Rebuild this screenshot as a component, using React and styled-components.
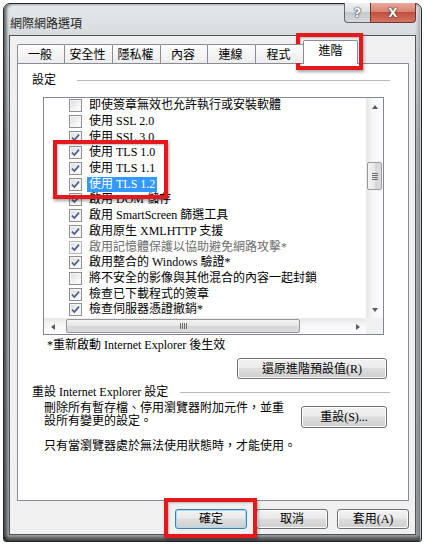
import styled, { createGlobalStyle } from "styled-components"

const GlobalStyle = createGlobalStyle`
  body {
    margin: 0;
    background: #fff;
    font-family: "Liberation Serif", "Noto Sans CJK TC", serif;
    font-size: 12px;
    color: #000;
  }
`

const tabs = [
  { label: '一般', width: 48 },
  { label: '安全性', width: 49 },
  { label: '隱私權', width: 49 },
  { label: '內容', width: 48 },
  { label: '連線', width: 49 },
  { label: '程式', width: 49 },
  { label: '進階', width: 55, active: true },
]

const options = [
  { label: '即使簽章無效也允許執行或安裝軟體' },
  { label: '使用 SSL 2.0' },
  { label: '使用 SSL 3.0', checked: true },
  { label: '使用 TLS 1.0', checked: true },
  { label: '使用 TLS 1.1', checked: true },
  { label: '使用 TLS 1.2', checked: true, selected: true },
  { label: '啟用 DOM 儲存', checked: true },
  { label: '啟用 SmartScreen 篩選工具', checked: true },
  { label: '啟用原生 XMLHTTP 支援', checked: true },
  { label: '啟用記憶體保護以協助避免網路攻擊*', checked: true, disabled: true },
  { label: '啟用整合的 Windows 驗證*', checked: true },
  { label: '將不安全的影像與其他混合的內容一起封鎖' },
  { label: '檢查已下載程式的簽章', checked: true },
  { label: '檢查伺服器憑證撤銷*', checked: true },
]

// red annotation boxes drawn over the screenshot
const marks = [
  { x: 296, y: 33, w: 67, h: 37 },
  { x: 53, y: 140, w: 115, h: 59 },
  { x: 164, y: 498, w: 93, h: 40 },
]

const Page = styled.div`
  position: relative;
  width: 429px;
  height: 546px;
  box-sizing: border-box;
  padding: 3px 0 0 3px;
  overflow: hidden;
  background: #fff;
`

const Window = styled.div`
  width: 419px;
  height: 539px;
  box-sizing: border-box;
  display: flex;
  flex-direction: column;
  padding: 0 5px 6px 5px;
  border: 1px solid #23272a;
  border-radius: 7px 7px 3px 3px;
  background: linear-gradient(to bottom, #e6e9eb 0, #d8dcdf 30px, #b3b7ba 140px, #9da1a4 100%);
  box-shadow: inset 3px 0 3px rgba(0, 0, 0, 0.45), inset -1px 0 0 rgba(255, 255, 255, 0.6),
    inset -4px 0 3px rgba(0, 0, 0, 0.15), inset 0 -4px 3px rgba(0, 0, 0, 0.45);
`

const TitleBar = styled.div`
  height: 31px;
  margin: 0 -5px;
  padding: 0 5px 0 6px;
  display: flex;
  justify-content: space-between;
  align-items: flex-start;
`

const Title = styled.div`
  margin-top: 12px;
  font-family: "Noto Sans CJK TC", sans-serif;
  font-size: 12px;
  line-height: 14px;
  color: #1e1e1e;
`

const Caption = styled.div`
  display: flex;
  margin-top: -1px;
`

const CaptionButton = styled.div`
  height: 20px;
  box-sizing: border-box;
  display: flex;
  align-items: center;
  justify-content: center;
  border: 1px solid #5e6469;
  border-top: none;
  font-family: "DejaVu Sans", sans-serif;
  font-weight: bold;
  color: #fff;
  text-shadow: 0 0 2px #2a2a2a, 0 0 1px #000;
`

const HelpButton = styled(CaptionButton)`
  width: 27px;
  margin-right: -1px;
  border-radius: 0 0 0 4px;
  font-size: 13px;
  background: linear-gradient(to bottom, #eef0f2 0, #dde1e4 45%, #c3c8cc 50%, #d6dadd 100%);
`

const CloseButton = styled(CaptionButton)`
  width: 46px;
  border-radius: 0 0 4px 0;
  border-color: #6a3a33;
  font-size: 12px;
  background: linear-gradient(to bottom, #e9a99b 0, #d98473 45%, #c24f3c 50%, #d57564 100%);
`

const Client = styled.div`
  flex: 1;
  display: flex;
  flex-direction: column;
  border: 1px solid #4f5459;
  background: #f0f0f0;
  padding: 0 6px 0 7px;
`

const TabStrip = styled.div`
  height: 28px;
  margin-bottom: -1px;
  display: flex;
  align-items: flex-end;
  position: relative;
  z-index: 1;
`

const Tab = styled.div`
  width: ${p => p.$width}px;
  height: ${p => (p.$active ? 24 : 19)}px;
  box-sizing: border-box;
  margin-left: -1px;
  margin-bottom: ${p => (p.$active ? 0 : 1)}px;
  display: flex;
  align-items: center;
  justify-content: center;
  padding: ${p => (p.$active ? '0 0 5px 0' : '0 2px 0 0')};
  border: 1px solid #898c95;
  border-bottom: none;
  border-radius: 2px 2px 0 0;
  background: ${p => (p.$active ? '#fff' : 'linear-gradient(to bottom, #fdfdfd, #ececec)')};
  font-family: "Noto Sans CJK TC", sans-serif;
  line-height: 14px;

  &:first-child {
    margin-left: 0;
  }
`

const Panel = styled.div`
  flex: 1;
  display: flex;
  flex-direction: column;
  border: 1px solid #898c95;
  background: #fff;
`

const GroupHeader = styled.div`
  display: flex;
  align-items: center;
  margin-top: ${p => p.$top}px;
  padding: 0 18px 0 14px;
  line-height: 14px;
`

const GroupRule = styled.div`
  flex: 1;
  margin-left: ${p => p.$gap}px;
  border-top: 1px solid #b9b9b9;
`

const ListBox = styled.div`
  width: 341px;
  height: 238px;
  box-sizing: border-box;
  margin: 10px 0 0 25px;
  border: 1px solid #828790;
  display: grid;
  grid-template-columns: 1fr 17px;
  grid-template-rows: 1fr 16px;
  overflow: hidden;
`

const Options = styled.div`
  overflow: hidden;
`

const Row = styled.div`
  height: 15.7px;
  display: flex;
  align-items: center;
  padding-left: 25px;
  white-space: nowrap;
`

const Box = styled.span`
  width: 13px;
  height: 13px;
  box-sizing: border-box;
  flex: none;
  margin-right: 5px;
  border: 1px solid ${p => (p.$disabled ? '#b5b5b5' : '#8f8f8f')};
  background: linear-gradient(135deg, #d9dadb 0, #f4f4f4 60%, #fff 100%);
  box-shadow: inset 0 0 0 1px #f6f6f6;
  display: flex;
  align-items: center;
  justify-content: center;
`

const OptionText = styled.span`
  padding: 0 2px;
  line-height: 15px;
  color: ${p => (p.$selected ? '#fff' : p.$disabled ? '#6d6d6d' : '#000')};
  background: ${p => (p.$selected ? '#3399ff' : 'transparent')};
`

const VScroll = styled.div`
  display: flex;
  flex-direction: column;
  background: linear-gradient(to right, #e6e6e6 0, #f5f5f5 30%, #fdfdfd 100%);
  border-left: 1px solid #ececec;
`

const HScroll = styled.div`
  display: flex;
  background: linear-gradient(to bottom, #e6e6e6 0, #f5f5f5 30%, #fdfdfd 100%);
  border-top: 1px solid #ececec;
`

const Corner = styled.div`
  background: #f0f0f0;
`

const ArrowBox = styled.div`
  flex: none;
  width: ${p => (p.$horizontal ? 17 : 16)}px;
  height: ${p => (p.$horizontal ? 15 : 17)}px;
  display: flex;
  align-items: center;
  justify-content: center;
`

const Arrow = styled.span`
  width: 0;
  height: 0;
  border: 3px solid transparent;
  ${p => p.$dir === 'up' && 'border-bottom: 4px solid #5a5a5a; border-top: 0;'}
  ${p => p.$dir === 'down' && 'border-top: 4px solid #5a5a5a; border-bottom: 0;'}
  ${p => p.$dir === 'left' && 'border-right: 4px solid #5a5a5a; border-left: 0;'}
  ${p => p.$dir === 'right' && 'border-left: 4px solid #5a5a5a; border-right: 0;'}
`

const Track = styled.div`
  flex: 1;
  display: flex;
  flex-direction: ${p => (p.$horizontal ? 'row' : 'column')};
`

const Thumb = styled.div`
  box-sizing: border-box;
  display: flex;
  align-items: center;
  justify-content: center;
  border: 1px solid #979797;
  border-radius: 2px;
  ${p =>
    p.$horizontal
      ? `width: ${p.$size}px; height: 14px; margin-left: ${p.$offset}px;
         background: linear-gradient(to bottom, #f4f4f4, #e6e6e6 50%, #d6d6d6 51%, #dcdcdc);`
      : `height: ${p.$size}px; width: 15px; margin-top: ${p.$offset}px;
         background: linear-gradient(to right, #f4f4f4, #e6e6e6 50%, #d6d6d6 51%, #dcdcdc);`}
`

const Grip = styled.span`
  ${p =>
    p.$horizontal
      ? 'width: 7px; height: 6px; background: repeating-linear-gradient(to right, #6a6a6a 0 1px, transparent 1px 2px);'
      : 'width: 6px; height: 7px; background: repeating-linear-gradient(to bottom, #6a6a6a 0 1px, transparent 1px 2px);'}
`

const Note = styled.div`
  margin: 3px 0 0 29px;
  line-height: 14px;
`

const ButtonRow = styled.div`
  display: flex;
  justify-content: flex-end;
  margin-top: 6px;
  padding-right: 21px;
`

const Button = styled.div`
  width: ${p => p.$width}px;
  height: ${p => p.$height || 20}px;
  box-sizing: border-box;
  margin-top: ${p => p.$top || 0}px;
  display: flex;
  align-items: center;
  justify-content: center;
  border: 1px solid ${p => (p.$default ? '#3c7fb1' : '#707070')};
  border-radius: 3px;
  background: linear-gradient(to bottom, #f2f2f2 0, #ebebeb 45%, #dddddd 50%, #cfcfcf 100%);
  box-shadow: inset 0 0 0 1px ${p => (p.$default ? '#a6dcf6' : '#fcfcfc')};
  font-size: 12px;
  line-height: 14px;
  flex: none;
`

const ResetRow = styled.div`
  display: flex;
  justify-content: space-between;
  align-items: flex-start;
  margin-top: 3px;
  padding: 0 21px 0 26px;
`

const Desc = styled.div`
  line-height: 13px;
  margin-left: ${p => p.$indent || 0}px;
  margin-top: ${p => p.$top || 0}px;
`

const Footer = styled.div`
  height: 33px;
  box-sizing: border-box;
  display: flex;
  justify-content: flex-end;
  gap: 9px;
  padding: 8px 0 5px;
`

const Mark = styled.div`
  position: absolute;
  left: ${p => p.$x}px;
  top: ${p => p.$y}px;
  width: ${p => p.$w}px;
  height: ${p => p.$h}px;
  box-sizing: border-box;
  border: 4px solid #e3191b;
  box-shadow: 1px 2px 3px rgba(0, 0, 0, 0.35), inset 1px 1px 2px rgba(0, 0, 0, 0.25);
`

function Check() {
  return (
    <svg width="9" height="9" viewBox="0 0 9 9">
      <path d="M1 4.6 L3.4 7 L8 1.6" fill="none" stroke="#4c5d8a" strokeWidth="1.7" />
    </svg>
  )
}

function App() {
  return (
    <Page>
      <GlobalStyle />
      <Window>
        <TitleBar>
          <Title>網際網路選項</Title>
          <Caption>
            <HelpButton>?</HelpButton>
            <CloseButton>X</CloseButton>
          </Caption>
        </TitleBar>
        <Client>
          <TabStrip>
            {tabs.map(tab => (
              <Tab key={tab.label} $width={tab.width} $active={tab.active}>{tab.label}</Tab>
            ))}
          </TabStrip>
          <Panel>
            <GroupHeader $top={9}>
              設定
              <GroupRule $gap={21} />
            </GroupHeader>
            <ListBox>
              <Options>
                {options.map(opt => (
                  <Row key={opt.label}>
                    <Box $disabled={opt.disabled}>{opt.checked && <Check />}</Box>
                    <OptionText $selected={opt.selected} $disabled={opt.disabled}>{opt.label}</OptionText>
                  </Row>
                ))}
              </Options>
              <VScroll>
                <ArrowBox><Arrow $dir="up" /></ArrowBox>
                <Track>
                  <Thumb $size={28} $offset={47}><Grip /></Thumb>
                </Track>
                <ArrowBox><Arrow $dir="down" /></ArrowBox>
              </VScroll>
              <HScroll>
                <ArrowBox $horizontal><Arrow $dir="left" /></ArrowBox>
                <Track $horizontal>
                  <Thumb $horizontal $size={234} $offset={5}><Grip $horizontal /></Thumb>
                </Track>
                <ArrowBox $horizontal><Arrow $dir="right" /></ArrowBox>
              </HScroll>
              <Corner />
            </ListBox>
            <Note>*重新啟動 Internet Explorer 後生效</Note>
            <ButtonRow>
              <Button $width={150} $height={21}>還原進階預設值(R)</Button>
            </ButtonRow>
            <GroupHeader $top={6}>
              重設 Internet Explorer 設定
              <GroupRule $gap={12} />
            </GroupHeader>
            <ResetRow>
              <Desc>
                刪除所有暫存檔、停用瀏覽器附加元件，並重<br />
                設所有變更的設定。
              </Desc>
              <Button $width={86} $height={22} $top={4}>重設(S)...</Button>
            </ResetRow>
            <Desc $indent={26} $top={12}>只有當瀏覽器處於無法使用狀態時，才能使用。</Desc>
          </Panel>
          <Footer>
            <Button $width={72} $default>確定</Button>
            <Button $width={72}>取消</Button>
            <Button $width={72}>套用(A)</Button>
          </Footer>
        </Client>
      </Window>
      {marks.map((m, i) => (
        <Mark key={i} $x={m.x} $y={m.y} $w={m.w} $h={m.h} />
      ))}
    </Page>
  )
}

export default App
